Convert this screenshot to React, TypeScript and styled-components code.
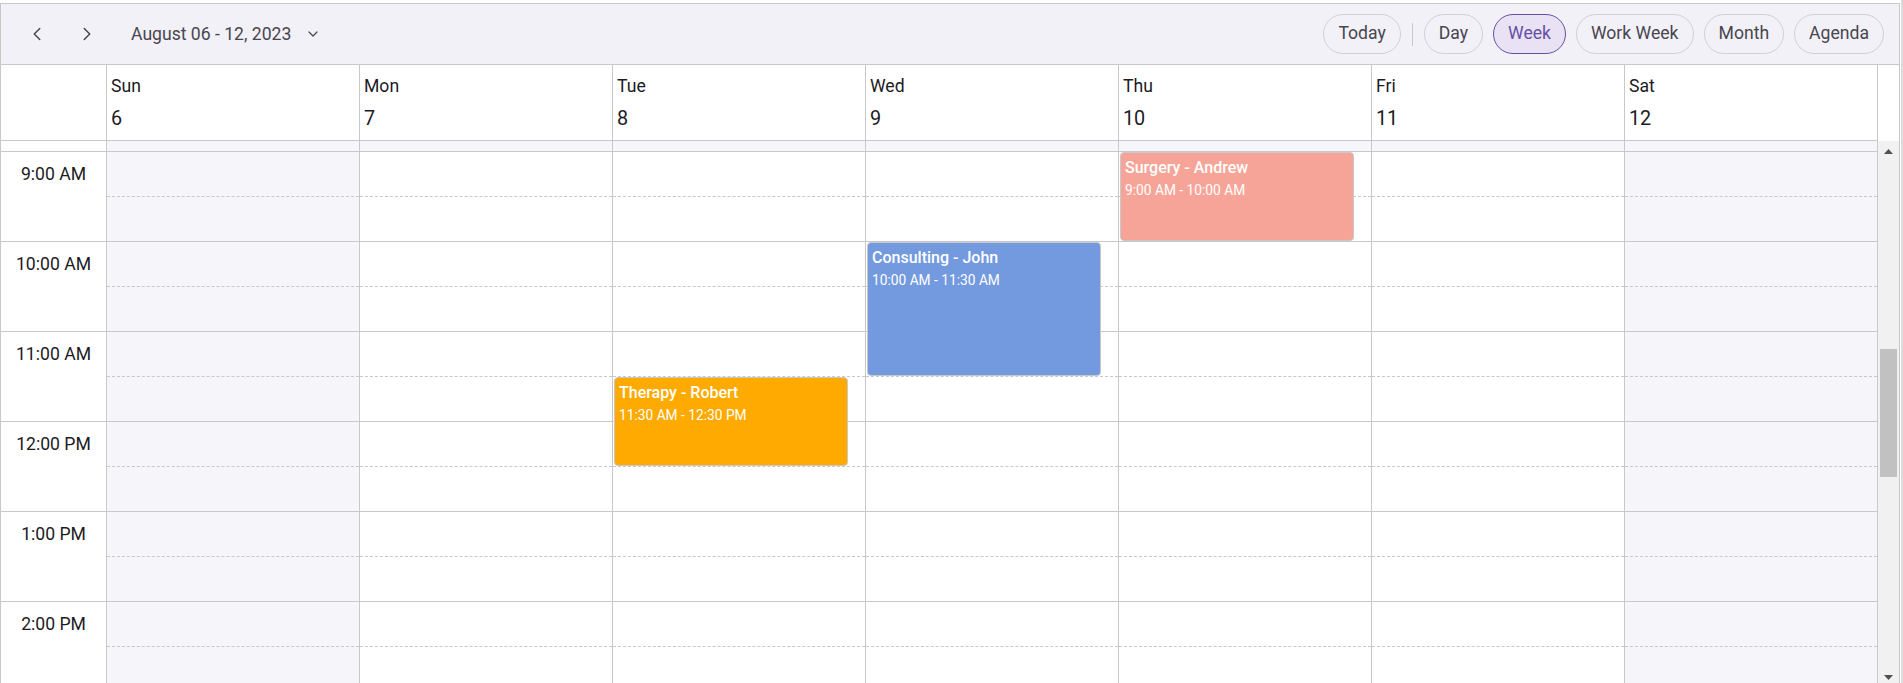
import React from 'react';
import styled, { createGlobalStyle } from 'styled-components';
import { ChevronLeft, ChevronRight, ChevronDown } from 'lucide-react';

const HOUR = 90;
const SLOT = HOUR / 2;
const FIRST = 8.5; // first half-hour slot rendered in the body
const LAST = 15; // rows past this are below the fold
const WORK_START = 9;
const WORK_END = 18;
const LINE = '#c8c8c8';

type Day = { name: string; date: number; weekend: boolean };
type CalEvent = { day: number; title: string; time: string; start: number; end: number; color: string };

const days: Day[] = [
  { name: 'Sun', date: 6, weekend: true },
  { name: 'Mon', date: 7, weekend: false },
  { name: 'Tue', date: 8, weekend: false },
  { name: 'Wed', date: 9, weekend: false },
  { name: 'Thu', date: 10, weekend: false },
  { name: 'Fri', date: 11, weekend: false },
  { name: 'Sat', date: 12, weekend: true },
];

const events: CalEvent[] = [
  { day: 4, title: 'Surgery - Andrew', time: '9:00 AM - 10:00 AM', start: 9, end: 10, color: '#f7a498' },
  { day: 3, title: 'Consulting - John', time: '10:00 AM - 11:30 AM', start: 10, end: 11.5, color: '#7399df' },
  { day: 2, title: 'Therapy - Robert', time: '11:30 AM - 12:30 PM', start: 11.5, end: 12.5, color: '#ffaa00' },
];

const views = ['Day', 'Week', 'Work Week', 'Month', 'Agenda'];

const hourLabel = (h: number) => {
  const suffix = h < 12 ? 'AM' : 'PM';
  const base = h % 12 === 0 ? 12 : h % 12;
  return `${base}:00 ${suffix}`;
};

const slots: number[] = [];
for (let t = FIRST; t < LAST; t += 0.5) slots.push(t);

const hours: number[] = [];
for (let h = Math.ceil(FIRST); h < LAST; h++) hours.push(h);

const GlobalStyle = createGlobalStyle`
  html, body {
    margin: 0;
    padding: 0;
    overflow: hidden;
    background: #ffffff;
    font-family: Roboto, "Noto Sans", Arial, sans-serif;
  }
  * {
    box-sizing: border-box;
  }
`;

const App: React.FC = () => {
  return (
    <Page>
      <GlobalStyle />
      <Scheduler>
        <Toolbar>
          <NavGroup>
            <IconButton aria-label="Previous">
              <ChevronLeft size={22} strokeWidth={1.6} />
            </IconButton>
            <IconButton aria-label="Next">
              <ChevronRight size={22} strokeWidth={1.6} />
            </IconButton>
            <DateButton>
              August 06 - 12, 2023
              <ChevronDown size={16} strokeWidth={1.8} />
            </DateButton>
          </NavGroup>
          <ViewGroup>
            <ViewButton>Today</ViewButton>
            <Separator />
            {views.map((v) => (
              <ViewButton key={v} $active={v === 'Week'}>
                {v}
              </ViewButton>
            ))}
          </ViewGroup>
        </Toolbar>

        <HeaderRow>
          <HeaderCorner />
          {days.map((d) => (
            <DayHeader key={d.name}>
              <DayName>{d.name}</DayName>
              <DayDate>{d.date}</DayDate>
            </DayHeader>
          ))}
          <div />
        </HeaderRow>

        <Body>
          <Viewport>
            <Grid>
              <TimeColumn>
                <TimeLead />
                {hours.map((h) => (
                  <TimeCell key={h}>{hourLabel(h)}</TimeCell>
                ))}
              </TimeColumn>
              {days.map((d, i) => (
                <DayColumn key={d.name}>
                  {slots.map((t) => (
                    <Slot
                      key={t}
                      $dashed={t % 1 === 0}
                      $off={d.weekend || t < WORK_START || t >= WORK_END}
                    />
                  ))}
                  {events
                    .filter((e) => e.day === i)
                    .map((e) => (
                      <EventCard
                        key={e.title}
                        $color={e.color}
                        style={{
                          top: (e.start - FIRST) * HOUR,
                          height: (e.end - e.start) * HOUR - 1,
                        }}
                      >
                        <EventTitle>{e.title}</EventTitle>
                        <EventTime>{e.time}</EventTime>
                      </EventCard>
                    ))}
                </DayColumn>
              ))}
            </Grid>
          </Viewport>
          <ScrollBar>
            <ScrollArrow>
              <svg width="9" height="5" viewBox="0 0 9 5">
                <polygon points="4.5,0 9,5 0,5" fill="#505050" />
              </svg>
            </ScrollArrow>
            <ScrollTrack>
              <Thumb />
            </ScrollTrack>
            <ScrollArrow>
              <svg width="9" height="5" viewBox="0 0 9 5">
                <polygon points="0,0 9,0 4.5,5" fill="#505050" />
              </svg>
            </ScrollArrow>
          </ScrollBar>
        </Body>
      </Scheduler>
      <EdgeStrip />
    </Page>
  );
};

const Page = styled.div`
  display: flex;
  align-items: flex-start;
`;

const Scheduler = styled.div`
  width: 1900px;
  height: 686px;
  margin-top: 3px;
  border: 1px solid ${LINE};
  display: flex;
  flex-direction: column;
  background: #ffffff;
`;

const EdgeStrip = styled.div`
  width: 2px;
  height: 100vh;
  margin-left: 1px;
  background: #dcdcdc;
`;

const Toolbar = styled.div`
  height: 61px;
  flex-shrink: 0;
  display: flex;
  align-items: center;
  justify-content: space-between;
  padding: 0 15px 0 16px;
  background: #f2f1f7;
  border-bottom: 1px solid ${LINE};
`;

const NavGroup = styled.div`
  display: flex;
  align-items: center;
  gap: 10px;
`;

const IconButton = styled.button`
  width: 40px;
  height: 40px;
  padding: 0;
  border: none;
  border-radius: 50%;
  background: transparent;
  color: #49454f;
  display: flex;
  align-items: center;
  justify-content: center;
`;

const DateButton = styled.button`
  height: 40px;
  padding: 0 14px;
  border: none;
  background: transparent;
  display: flex;
  align-items: center;
  gap: 14px;
  font-family: Roboto, sans-serif;
  font-size: 17.6px;
  color: #49454f;
`;

const ViewGroup = styled.div`
  display: flex;
  align-items: center;
  gap: 10px;
`;

const ViewButton = styled.button<{ $active?: boolean }>`
  height: 40px;
  padding: 0 14px;
  border-radius: 20px;
  border: 1px solid ${(p) => (p.$active ? '#6750a4' : '#d2d0d6')};
  background: ${(p) => (p.$active ? '#e8e2f4' : 'transparent')};
  color: ${(p) => (p.$active ? '#6750a4' : '#49454f')};
  font-family: Roboto, sans-serif;
  font-size: 17.6px;
  line-height: 1;
`;

const Separator = styled.span`
  width: 1px;
  height: 23px;
  margin: 0 1px;
  background: #cac8ce;
`;

const HeaderRow = styled.div`
  height: 76px;
  flex-shrink: 0;
  display: grid;
  grid-template-columns: 106px repeat(7, 1fr) 21px;
`;

const HeaderCorner = styled.div`
  border-right: 1px solid ${LINE};
  border-bottom: 1px solid ${LINE};
`;

const DayHeader = styled.div`
  border-right: 1px solid ${LINE};
  border-bottom: 1px solid ${LINE};
  padding: 11px 0 0 4px;
  color: #1c1b1f;
`;

const DayName = styled.div`
  font-size: 17.6px;
  line-height: 21px;
`;

const DayDate = styled.div`
  margin-top: 10px;
  font-size: 19.8px;
  line-height: 24px;
`;

const Body = styled.div`
  flex: 1;
  min-height: 0;
  display: flex;
`;

const Viewport = styled.div`
  flex: 1;
  overflow: hidden;
`;

const Grid = styled.div`
  display: grid;
  grid-template-columns: 106px repeat(7, 1fr);
  margin-top: -34px;
`;

const TimeColumn = styled.div`
  border-right: 1px solid ${LINE};
`;

const TimeLead = styled.div`
  height: ${SLOT}px;
  border-bottom: 1px solid ${LINE};
`;

const TimeCell = styled.div`
  height: ${HOUR}px;
  padding-top: 12px;
  border-bottom: 1px solid ${LINE};
  text-align: center;
  font-size: 17.6px;
  line-height: 21px;
  color: #1c1b1f;
`;

const DayColumn = styled.div`
  position: relative;
  border-right: 1px solid ${LINE};
`;

const Slot = styled.div<{ $dashed: boolean; $off: boolean }>`
  height: ${SLOT}px;
  border-bottom: 1px ${(p) => (p.$dashed ? 'dashed' : 'solid')} ${LINE};
  background: ${(p) => (p.$off ? '#f5f5fa' : '#ffffff')};
`;

const EventCard = styled.div<{ $color: string }>`
  position: absolute;
  left: 1px;
  width: calc(100% - 18px);
  padding: 4px 4px 3px;
  border: 1px solid #c9c9c9;
  border-radius: 4px;
  background: ${(p) => p.$color};
  color: #ffffff;
  overflow: hidden;
`;

const EventTitle = styled.div`
  font-size: 16px;
  font-weight: 500;
  line-height: 22px;
`;

const EventTime = styled.div`
  margin-top: 2px;
  font-size: 13.75px;
  line-height: 18px;
`;

const ScrollBar = styled.div`
  width: 21px;
  flex-shrink: 0;
  display: flex;
  flex-direction: column;
  background: #f1f1f1;
`;

const ScrollArrow = styled.div`
  height: 21px;
  flex-shrink: 0;
  display: flex;
  align-items: center;
  justify-content: center;
`;

const ScrollTrack = styled.div`
  flex: 1;
  padding: 0 2px;
`;

const Thumb = styled.div`
  margin-top: 187px;
  height: 128px;
  background: #c1c1c1;
`;

export default App;
